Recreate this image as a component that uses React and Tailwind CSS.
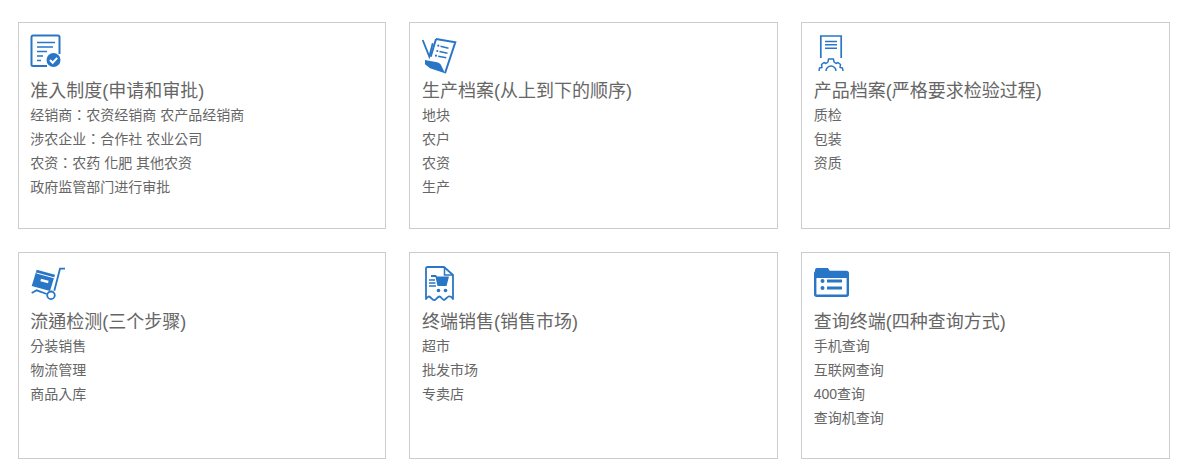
import React from 'react';

const BLUE = '#2a76c6';

const PolicyIcon = () => (
  <svg width="32" height="34" viewBox="0 0 32 34" fill="none">
    <path d="M17 32H3a1.500 1.500 0 0 1-1.500-1.500V3A1.500 1.500 0 0 1 3 1.500h25A1.500 1.500 0 0 1 29.500 3v17" stroke={BLUE} strokeWidth="2" />
    <path d="M7 8.500h18M7 13h16M7 17.500h10M7 22h6M7 26.500h4" stroke={BLUE} strokeWidth="1.600" />
    <circle cx="23.500" cy="26" r="7" fill={BLUE} />
    <path d="M20 26l2.700 2.700 4.500-4.800" stroke="#fff" strokeWidth="2" />
  </svg>
);

const ProductionIcon = () => (
  <svg className="mt-[4px]" width="36" height="37" viewBox="0 0 36 37" fill="none">
    <path d="M14 1l19.300 3.300L23 35.300" stroke={BLUE} strokeWidth="2" />
    <path d="M14 1L8.700 18.700" stroke={BLUE} strokeWidth="2" />
    <path d="M0.700 2l6.600 16.700 3.400-13.400" stroke={BLUE} strokeWidth="1.800" />
    <circle cx="16.300" cy="7.700" r="1.100" fill={BLUE} />
    <circle cx="15.300" cy="13" r="1.100" fill={BLUE} />
    <circle cx="14" cy="17.700" r="1.100" fill={BLUE} />
    <path d="M18.500 8.300l8 2M17.500 13.500l8 1.800M16.200 18.200l8 1.500" stroke={BLUE} strokeWidth="1.500" />
    <path d="M3 22l12 2.300c2 .4 3.500 1.700 4.500 3.700L23 35.300 8 30.300l-5-4z" fill={BLUE} />
  </svg>
);

const ArchiveIcon = () => (
  <svg className="ml-[4px] mt-[1px]" width="26" height="37" viewBox="0 0 26 37" fill="none">
    <path d="M2.800 23V1h20.400v22" stroke={BLUE} strokeWidth="1.700" />
    <path d="M7 6.500h12M7 9.800h12M7 13.200h12" stroke={BLUE} strokeWidth="1.500" />
    <path
      d="M1 36l.5-3 2.500-.5-.5-3 2.500-2 2 1 2-1.500.500-3h5l.5 3 2 1.500 2-1 2.500 2-.5 3 2.500.5.5 3"
      stroke={BLUE}
      strokeWidth="1.500"
      strokeLinejoin="round"
    />
    <path d="M8 36a5 5 0 0 1 10 0" stroke={BLUE} strokeWidth="1.500" />
  </svg>
);

const CartIcon = () => (
  <svg className="ml-[1px] mt-[3px]" width="36" height="35" viewBox="0 0 36 35" fill="none">
    <path d="M34 1.700h-5L23.300 23.700" stroke={BLUE} strokeWidth="1.800" />
    <path d="M5.700 2.700L24 7.700 19 24 .7 19z" fill={BLUE} />
    <path d="M5.500 6l17.500 4.800" stroke="#fff" strokeWidth="1" />
    <path d="M9.700 13l7.600 2" stroke="#fff" strokeWidth="2.400" />
    <path d="M.7 26l5-2.700 10 3.700" stroke={BLUE} strokeWidth="1.800" />
    <circle cx="20" cy="28.300" r="3.800" stroke={BLUE} strokeWidth="1.800" />
  </svg>
);

const ReceiptIcon = () => (
  <svg className="ml-[3px] mt-[2px]" width="30" height="37" viewBox="0 0 30 37" fill="none">
    <path
      d="M19 1H2.500A1.500 1.500 0 0 0 1 2.500V33c2-3 3-3 4.500-1.500s3 3.500 4.500 2.500 3-3.500 4.500-3.500 3 3.500 4.500 3.500 3-3 4.500-3.500 3 0 4.500 2.500V9z"
      stroke={BLUE}
      strokeWidth="1.800"
      strokeLinejoin="round"
    />
    <path d="M19.500 1.500V9H28" stroke={BLUE} strokeWidth="1.500" />
    <path d="M6 9h5l1 1.500h12L21.500 20H12.500L10.500 11H6z" fill={BLUE} />
    <path d="M4 14h6M4 17h6.500M4 20h7" stroke={BLUE} strokeWidth="1.500" />
    <circle cx="13.500" cy="24.500" r="1.800" fill={BLUE} />
    <circle cx="20.500" cy="24.500" r="1.800" fill={BLUE} />
  </svg>
);

const FolderIcon = () => (
  <svg className="mt-[3px]" width="35" height="30" viewBox="0 0 35 30" fill="none">
    <path d="M1 3a2 2 0 0 1 2-2h11l3 5h15a2 2 0 0 1 2 2v3H1z" fill={BLUE} />
    <rect x="1.200" y="5" width="32.600" height="23.800" rx="1.500" stroke={BLUE} strokeWidth="2.400" />
    <circle cx="8.500" cy="14" r="2" fill={BLUE} />
    <circle cx="8.500" cy="21" r="2" fill={BLUE} />
    <path d="M13 14h15M13 21h15" stroke={BLUE} strokeWidth="3" />
  </svg>
);

const cards = [
  {
    icon: <PolicyIcon />,
    title: '准入制度(申请和审批)',
    items: ['经销商：农资经销商 农产品经销商', '涉农企业：合作社 农业公司', '农资：农药 化肥 其他农资', '政府监管部门进行审批'],
  },
  {
    icon: <ProductionIcon />,
    title: '生产档案(从上到下的顺序)',
    items: ['地块', '农户', '农资', '生产'],
  },
  {
    icon: <ArchiveIcon />,
    title: '产品档案(严格要求检验过程)',
    items: ['质检', '包装', '资质'],
  },
  {
    icon: <CartIcon />,
    title: '流通检测(三个步骤)',
    items: ['分装销售', '物流管理', '商品入库'],
  },
  {
    icon: <ReceiptIcon />,
    title: '终端销售(销售市场)',
    items: ['超市', '批发市场', '专卖店'],
  },
  {
    icon: <FolderIcon />,
    title: '查询终端(四种查询方式)',
    items: ['手机查询', '互联网查询', '400查询', '查询机查询'],
  },
];

const App = () => {
  return (
    <div className="w-[1186px] h-[468px] bg-white pl-[17.6px] pt-[22px] font-['Liberation_Sans','Noto_Sans_CJK_TC',sans-serif] text-[#666]">
      <div className="grid grid-cols-3 w-[1152px] gap-x-[23.1px] gap-y-[23.3px]">
        {cards.map((card) => (
          <div key={card.title} className="h-[207px] border border-[#ccc] px-[11.7px] pt-[11px]">
            <div className="h-[36px] flex items-start">{card.icon}</div>
            <h3 className="mt-[10.3px] text-[18px] leading-[23px] font-normal">{card.title}</h3>
            <ul className="text-[14px] leading-[24px]">
              {card.items.map((item) => (
                <li key={item}>{item}</li>
              ))}
            </ul>
          </div>
        ))}
      </div>
    </div>
  );
};

export default App;
